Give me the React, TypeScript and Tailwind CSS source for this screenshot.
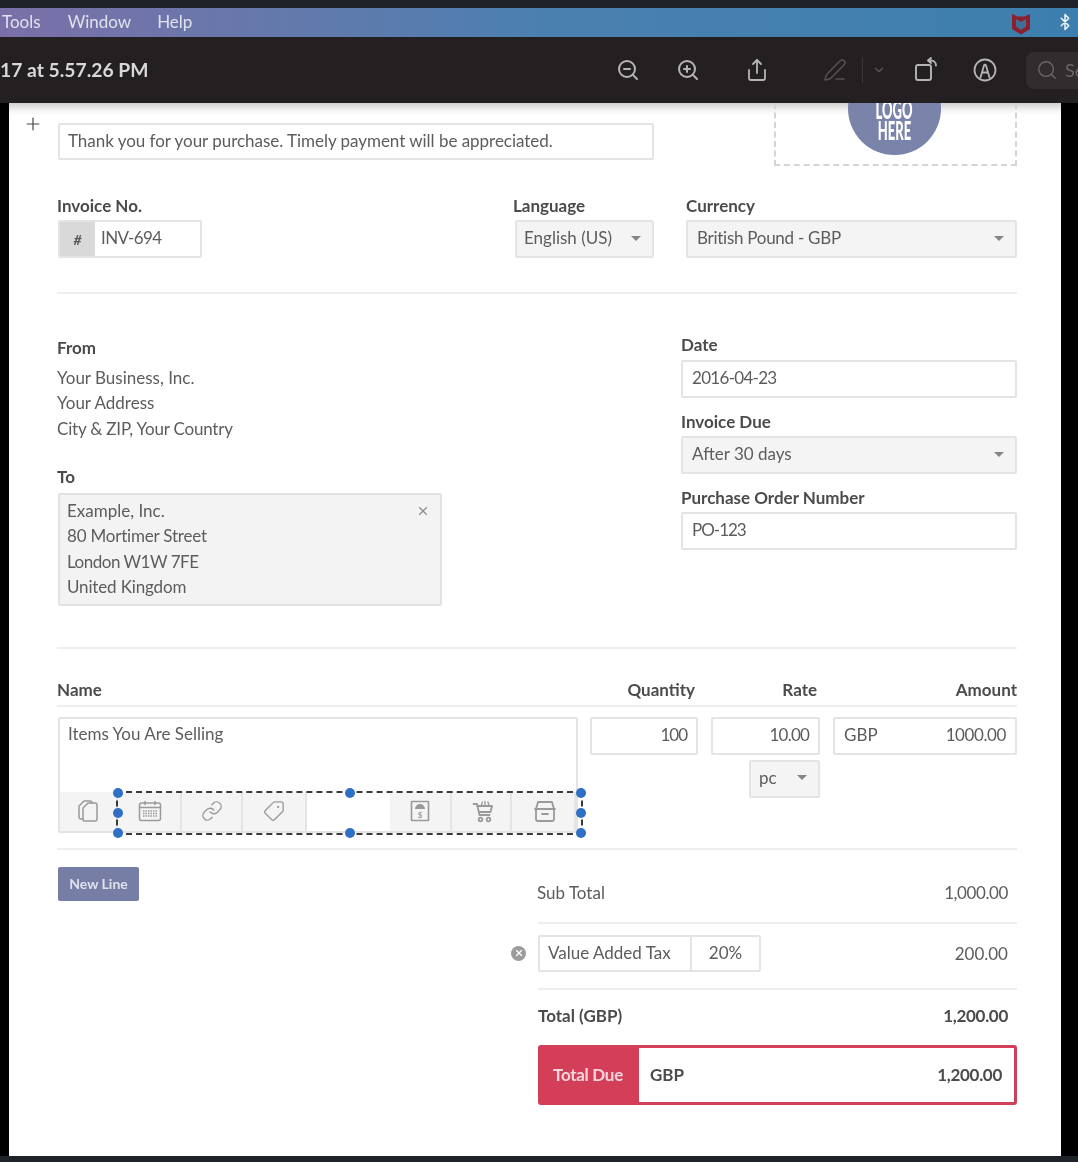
import React from "react";
import { ZoomIn, ZoomOut, Share, PenLine, ChevronDown, Search, Bluetooth, Plus, X, Link as LinkIcon, Tag } from "lucide-react";

const Caret = () => <span className="w-0 h-0 border-x-[5px] border-x-transparent border-t-[5px] border-t-[#858585]" />;

const Label = ({ children }: { children: React.ReactNode }) => (
  <div className="h-5 leading-5 text-[17px] font-bold text-[#4b4b4b] whitespace-nowrap">{children}</div>
);

const Box = ({ className = "", children }: { className?: string; children?: React.ReactNode }) => (
  <div className={"border-2 border-[#e4e4e4] rounded-[2px] flex items-center text-[#5c5c5c] whitespace-nowrap " + className}>{children}</div>
);

const Select = ({ className = "", text }: { className?: string; text: string }) => (
  <Box className={"h-[38px] pb-[2px] bg-[#f4f4f4] justify-between pr-[11px] " + className}>
    <span>{text}</span>
    <Caret />
  </Box>
);

const Rule = ({ className = "" }: { className?: string }) => <div className={"h-[2px] bg-[#eeeeee] " + className} />;

const Handle = ({ className }: { className: string }) => (
  <span className={"absolute w-[10px] h-[10px] rounded-full bg-[#2f70c4] -translate-x-1/2 -translate-y-1/2 " + className} />
);

const Cell = ({ w, children }: { w: string; children: React.ReactNode }) => (
  <div className={"h-full bg-[#f4f4f4] border-r-2 border-[#e4e4e4] flex items-center justify-center text-[#9a9a9a] " + w}>{children}</div>
);

const strokeIcon = { fill: "none", stroke: "currentColor", strokeWidth: 1.6, strokeLinecap: "round" as const, strokeLinejoin: "round" as const };

export default function App() {
  return (
    <div className="w-[1078px] h-[1162px] overflow-hidden flex flex-col bg-black blur-[0.5px]" style={{ fontFamily: "Lato, 'Open Sans', sans-serif" }}>
      <div className="h-2 shrink-0 bg-[#1f2228]" />
      {/* menubar */}
      <div className="h-[29px] shrink-0 flex items-center pl-[2px] pb-[2px] text-[17px] text-[#dfe3ee] bg-gradient-to-r from-[#7a70a8] via-[#4a80b0] to-[#3c7fae]">
        <span>Tools</span>
        <span className="ml-[27px]">Window</span>
        <span className="ml-[26px]">Help</span>
        <svg className="ml-auto mt-[3px]" width="20" height="24" viewBox="0 0 20 24">
          <path d="M1 3l5.500 2.500h7L19 3v15l-9 5.500L1 18z" fill="#8e1f2c" />
          <path d="M5 8l5 3 5-3v7.500L10 19l-5-3.500z" fill="#3f6f98" />
        </svg>
        <Bluetooth className="ml-[25px] mr-[4px]" size={18} color="#f2f5fa" strokeWidth={2} />
      </div>
      {/* toolbar */}
      <div className="h-[66px] shrink-0 bg-[#241f20] flex items-center text-[#b7b4b4] overflow-hidden">
        <span className="text-[19.300px] font-bold text-[#d9d7d7] whitespace-nowrap">17 at 5.57.26 PM</span>
        <ZoomOut className="ml-auto shrink-0" size={24} strokeWidth={2} />
        <ZoomIn className="ml-[36px] shrink-0" size={24} strokeWidth={2} />
        <Share className="ml-[45px] shrink-0" size={24} strokeWidth={1.8} />
        <PenLine className="ml-[54px] shrink-0 text-[#565253]" size={24} strokeWidth={1.5} />
        <span className="ml-[15px] w-px h-[26px] bg-[#3a3536] shrink-0" />
        <ChevronDown className="ml-[9px] shrink-0 text-[#5e5a5b]" size={14} strokeWidth={2} />
        <svg className="ml-[28px] shrink-0" width="24" height="26" viewBox="0 0 24 26" {...strokeIcon} strokeWidth={1.9}>
          <rect x="2" y="8" width="15" height="15" rx="2" />
          <path d="M14 3.500h3a5 5 0 0 1 5 5M14 3.500l3-2.500M14 3.500l3 2.500" />
        </svg>
        <svg className="ml-[35px] shrink-0" width="24" height="24" viewBox="0 0 24 24" {...strokeIcon} strokeWidth={1.8}>
          <circle cx="12" cy="12" r="10.500" />
          <path d="M7.500 19.500L11 7.500c.3-1 1.700-1 2 0l3.500 12M9 14.500h6" />
        </svg>
        <div className="ml-[29px] w-[52px] h-[37px] shrink-0 rounded-l-lg bg-[#312c2d] flex items-center pl-[10px] text-[#6b6667] text-[18px] overflow-hidden">
          <Search className="shrink-0" size={22} strokeWidth={1.5} />
          <span className="ml-[7px]">Se</span>
        </div>
      </div>
      {/* page */}
      <div className="flex-1 flex min-h-0">
        <div className="w-[9px] shrink-0" />
        <main className="relative w-[1052px] shrink-0 bg-white pl-[48px] pr-[44px] overflow-hidden text-[#5c5c5c] text-[17px] shadow-[inset_0_12px_10px_-8px_rgba(0,0,0,0.22)]">
          <Plus className="absolute left-[14px] top-[11px] text-[#444]" size={20} strokeWidth={1.4} />
          {/* note + logo */}
          <div className="flex justify-between items-start h-[63px]">
            <Box className="ml-px mt-5 h-[37px] pb-[2px] w-[596px] pl-[8px] tracking-[-0.03px]">Thank you for your purchase. Timely payment will be appreciated.</Box>
            <div className="w-[243px] h-[63px] border-x-2 border-b-2 border-dashed border-[#d4d4d4] flex justify-center">
              <div className="-mt-[41px] ml-[-3px] w-[93px] h-[93px] shrink-0 rounded-full bg-[#7a83a9] flex flex-col items-center justify-end pb-[14px] text-white font-black text-[26px] leading-[21px]">
                <span className="scale-x-[0.5]">LOGO</span>
                <span className="scale-x-[0.5]">HERE</span>
              </div>
            </div>
          </div>
          {/* invoice settings */}
          <div className="mt-[30px] flex">
            <div className="w-[456px]">
              <Label>Invoice No.</Label>
              <Box className="ml-px mt-1 h-[38px] w-[144px]">
                <span className="w-[35px] h-full bg-[#d9d9d9] flex items-center justify-center text-[14px] font-bold italic text-[#555]">#</span>
                <span className="ml-[6px] pb-[2px] tracking-[-0.6px]">INV-694</span>
              </Box>
            </div>
            <div className="w-[173px]">
              <Label>Language</Label>
              <Select className="ml-[2px] mt-1 w-[139px] pl-[7px]" text="English (US)" />
            </div>
            <div className="flex-1">
              <Label>Currency</Label>
              <Select className="mt-1 pl-[9px] tracking-[-0.27px]" text="British Pound - GBP" />
            </div>
          </div>
          <Rule className="mt-[34px]" />
          {/* parties */}
          <div className="flex justify-between">
            <div className="w-[385px] pt-[44px]">
              <Label>From</Label>
              <div className="mt-[7px] leading-[25.300px]">
                <div>Your Business, Inc.</div>
                <div>Your Address</div>
                <div className="tracking-[-0.2px]">City &amp; ZIP, Your Country</div>
              </div>
              <div className="mt-[26px]"><Label>To</Label></div>
              <div className="ml-px mt-[6px] h-[113px] border-2 border-[#e2e2e2] rounded-[2px] bg-[#f3f3f3] pt-[3px] pl-[7px] pr-[10px] flex justify-between leading-[25.400px]">
                <div>
                  <div>Example, Inc.</div>
                  <div className="tracking-[-0.2px]">80 Mortimer Street</div>
                  <div className="tracking-[-0.5px]">London W1W 7FE</div>
                  <div className="tracking-[-0.15px]">United Kingdom</div>
                </div>
                <X className="mt-[6px] text-[#8c8c8c]" size={14} strokeWidth={2} />
              </div>
            </div>
            <div className="w-[336px] pt-[41px]">
              <Label>Date</Label>
              <Box className="mt-[5px] h-[38px] pb-[2px] pl-[9px] tracking-[-0.7px]">2016-04-23</Box>
              <div className="mt-[14px]"><Label>Invoice Due</Label></div>
              <Select className="mt-1 pl-[9px]" text="After 30 days" />
              <div className="mt-[14px]"><Label>Purchase Order Number</Label></div>
              <Box className="mt-1 h-[38px] pb-[2px] pl-[9px] tracking-[-1px]">PO-123</Box>
            </div>
          </div>
          <Rule className="mt-[41px]" />
          {/* line item header */}
          <div className="mt-[31px] pb-[5px] border-b-2 border-[#eeeeee] flex">
            <div className="w-[532px]"><Label>Name</Label></div>
            <div className="w-[106px] text-right"><Label>Quantity</Label></div>
            <div className="w-[122px] text-right"><Label>Rate</Label></div>
            <div className="flex-1 text-right"><Label>Amount</Label></div>
          </div>
          {/* line item */}
          <div className="ml-px mt-[10px] flex items-start">
            <div className="relative w-[520px] h-[116px] border-2 border-[#e4e4e4] rounded-[2px] flex flex-col">
              <div className="flex-1 pl-[8px] pt-[2px]">Items You Are Selling</div>
              <div className="h-[39px] flex">
                <Cell w="w-[58px]">
                  <svg width="24" height="26" viewBox="0 0 24 26" {...strokeIcon} strokeWidth={1.5}>
                    <path d="M7 21H5a2 2 0 0 1-2-2V8l5-5h6a2 2 0 0 1 2 2" />
                    <path d="M8 23a2 2 0 0 1-1-2V10l5-5h7a2 2 0 0 1 2 2v14a2 2 0 0 1-2 2z" />
                  </svg>
                </Cell>
                <Cell w="w-[64px] pl-[2px]">
                  <svg width="24" height="22" viewBox="0 0 24 22" {...strokeIcon} strokeWidth={1.5}>
                    <rect x="1.500" y="3" width="21" height="17.500" rx="2" />
                    <path d="M1.500 7.500h21M7 1.500v3M17 1.500v3" />
                    <path d="M5 11h14M5 13.500h14M5 16h14" strokeDasharray="1.500 1" strokeLinecap="butt" />
                  </svg>
                </Cell>
                <Cell w="w-[61px]"><LinkIcon size={22} strokeWidth={1.5} /></Cell>
                <Cell w="w-[64px]"><Tag className="rotate-90" size={22} strokeWidth={1.5} /></Cell>
                <div className="w-[83px] h-full bg-white" />
                <Cell w="w-[62px]">
                  <svg width="20" height="22" viewBox="0 0 20 22" {...strokeIcon}>
                    <rect x="1.500" y="1.500" width="17" height="19" />
                    <path d="M5 9a5 5 0 0 1 10 0z" fill="currentColor" stroke="none" />
                    <text x="10" y="18" textAnchor="middle" fontSize="8" fontWeight="700" fill="currentColor" stroke="none">$</text>
                  </svg>
                </Cell>
                <Cell w="w-[60px] pl-[3px]">
                  <svg width="22" height="24" viewBox="0 0 22 24" {...strokeIcon} strokeWidth={1.8}>
                    <path d="M1.500 5H5l2.500 11h10" />
                    <path d="M5.500 7H20l-1.500 6H7" />
                    <path d="M9 7l1.500-4M13 7V2.500M17 7l-1-4" strokeWidth={1.3} />
                    <circle cx="8.500" cy="20.500" r="1.800" />
                    <circle cx="16.500" cy="20.500" r="1.800" />
                  </svg>
                </Cell>
                <Cell w="flex-1 border-r-0 pl-[3px]">
                  <svg width="24" height="22" viewBox="0 0 24 22" {...strokeIcon} strokeWidth={1.8}>
                    <path d="M3 9l2-7h14l2 7zM2 9h20M3 9v10a2 2 0 0 0 2 2h14a2 2 0 0 0 2-2V9M9 14h6" />
                  </svg>
                </Cell>
              </div>
              {/* selection */}
              <div className="absolute left-[56px] top-[72px] w-[467px] h-[44px] border-2 border-dashed border-[#3a3a3a]">
                <Handle className="left-0 top-0" />
                <Handle className="left-0 top-1/2" />
                <Handle className="left-0 top-full" />
                <Handle className="left-1/2 top-0" />
                <Handle className="left-1/2 top-full" />
                <Handle className="left-full top-0" />
                <Handle className="left-full top-1/2" />
                <Handle className="left-full top-full" />
              </div>
            </div>
            <Box className="ml-[12px] h-[38px] pb-[2px] w-[108px] justify-end pr-[9px] tracking-[-1px]">100</Box>
            <div className="ml-[13px] w-[109px] flex flex-col items-end">
              <Box className="h-[38px] pb-[2px] w-full justify-end pr-[9px] tracking-[-0.800px]">10.00</Box>
              <Select className="mt-[5px] w-[71px] pl-[8px]" text="pc" />
            </div>
            <Box className="ml-[13px] h-[38px] pb-[2px] flex-1 justify-between px-[9px]">
              <span>GBP</span>
              <span className="tracking-[-0.4px]">1000.00</span>
            </Box>
          </div>
          <Rule className="mt-[15px]" />
          {/* totals */}
          <div className="flex justify-between items-start">
            <div className="ml-px mt-[17px] w-[81px] h-[34px] rounded-[2px] bg-[#767ea6] text-[#dfe2ee] text-[14px] font-bold flex items-center justify-center">New Line</div>
            <div className="w-[479px]">
              <div className="pt-[33px] pb-[19px] pr-[9px] flex justify-between leading-5">
                <span className="-ml-px">Sub Total</span>
                <span className="tracking-[-0.4px]">1,000.00</span>
              </div>
              <Rule />
              <div className="pt-[11px] pb-[16px] pr-[9px] flex items-center justify-between">
                <div className="flex items-center -ml-[27px]">
                  <span className="w-[15px] h-[15px] rounded-full bg-[#9c9c9c] flex items-center justify-center text-white mr-[12px]">
                    <X size={10} strokeWidth={3} />
                  </span>
                  <Box className="w-[223px] h-[37px]">
                    <span className="w-[152px] h-full pb-[2px] flex items-center pl-[8px] border-r-2 border-[#e4e4e4]">Value Added Tax</span>
                    <span className="flex-1 pb-[2px] text-center">20%</span>
                  </Box>
                </div>
                <span>200.00</span>
              </div>
              <Rule />
              <div className="pt-[16px] pr-[9px] flex justify-between leading-5 font-bold text-[#4b4b4b]">
                <span>Total (GBP)</span>
                <span className="tracking-[-0.3px]">1,200.00</span>
              </div>
              <div className="mt-[19px] h-[60px] flex border-[3px] border-[#d33f58] rounded-[3px] font-bold text-[#4b4b4b]">
                <div className="w-[98px] bg-[#d33f58] text-[#f7d5db] flex items-center justify-center pr-[4px] tracking-[-0.3px]">Total Due</div>
                <div className="flex-1 flex items-center justify-between pl-[11px] pr-[12px]">
                  <span>GBP</span>
                  <span className="tracking-[-0.3px]">1,200.00</span>
                </div>
              </div>
            </div>
          </div>
        </main>
      </div>
      <div className="h-[6px] shrink-0 bg-[#1f2228]" />
    </div>
  );
}
